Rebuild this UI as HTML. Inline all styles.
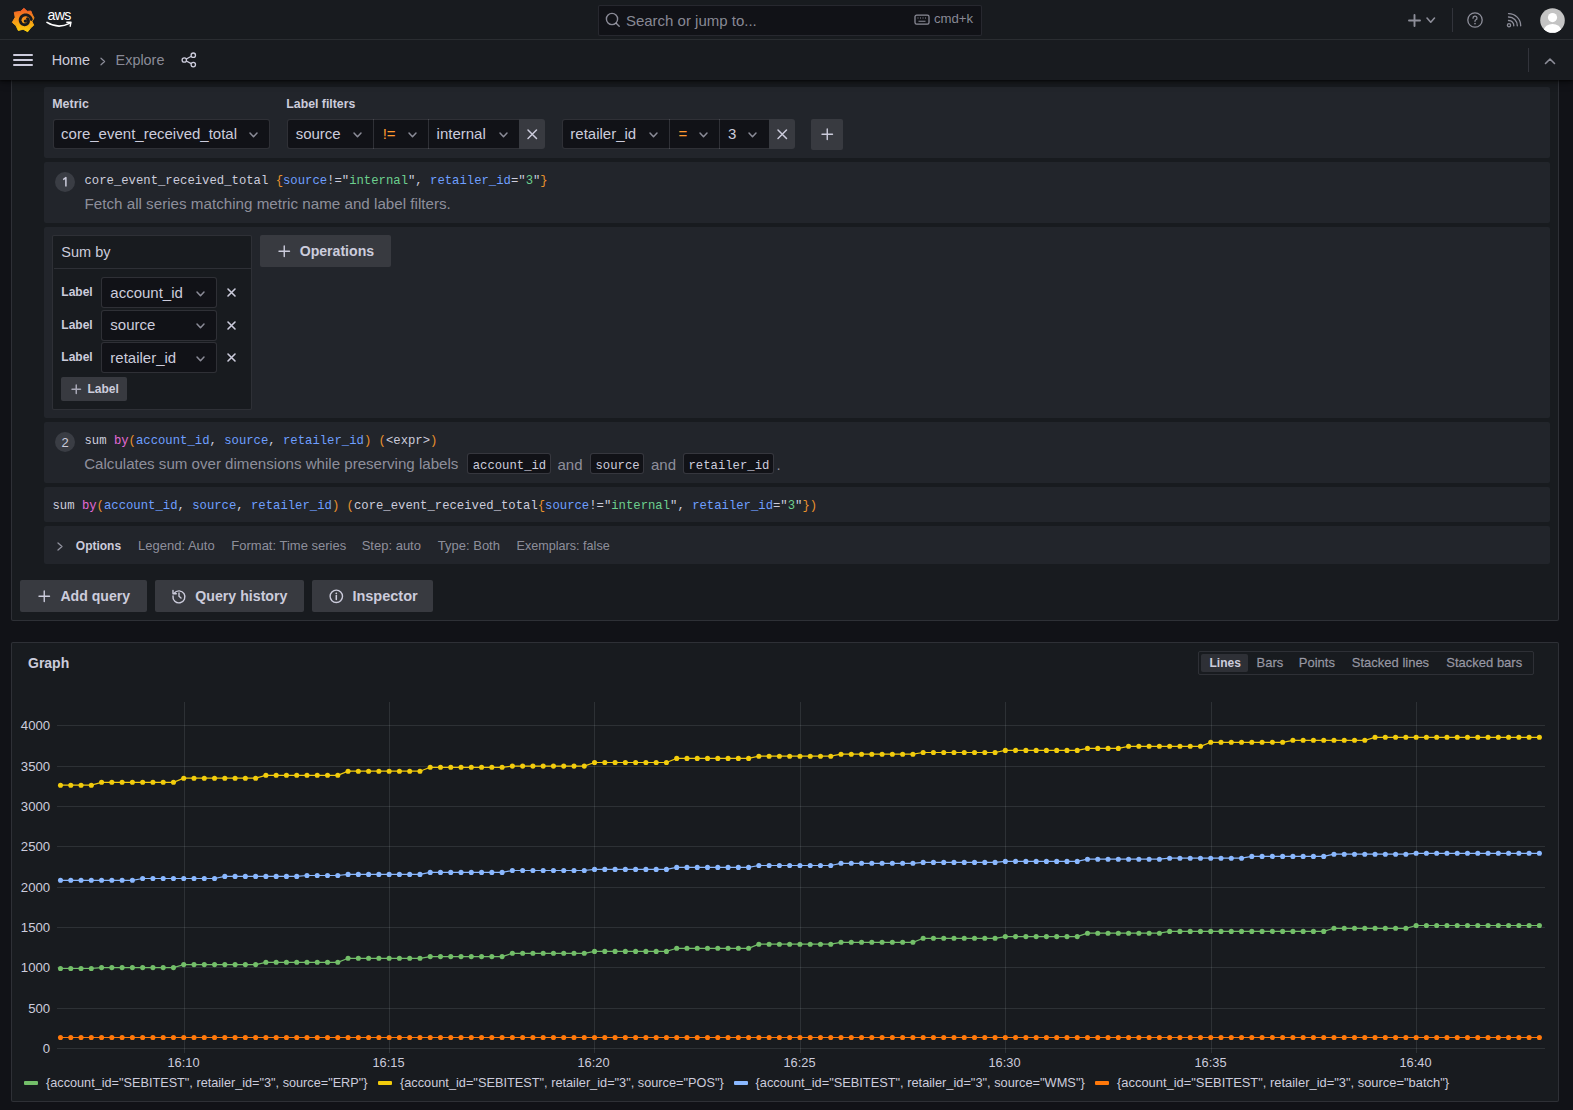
<!DOCTYPE html><html><head><meta charset="utf-8"><style>
html,body{margin:0;padding:0;}
body{width:1573px;height:1110px;overflow:hidden;background:#111217;position:relative;font-family:'Liberation Sans', sans-serif;}
</style></head><body>
<div style="position:absolute;left:11px;top:-20px;width:1546px;height:639px;background:#181b1f;border:1px solid rgba(204,204,220,0.12);border-radius:2px;"></div>
<div style="position:absolute;left:44px;top:87px;width:1506px;height:71px;background:#22252b;border-radius:2px;"></div>
<div style="position:absolute;left:44px;top:162px;width:1506px;height:61px;background:#22252b;border-radius:2px;"></div>
<div style="position:absolute;left:44px;top:227px;width:1506px;height:191px;background:#22252b;border-radius:2px;"></div>
<div style="position:absolute;left:44px;top:422px;width:1506px;height:60.5px;background:#22252b;border-radius:2px;"></div>
<div style="position:absolute;left:44px;top:487.2px;width:1506px;height:34.6px;background:#22252b;border-radius:2px;"></div>
<div style="position:absolute;left:44px;top:526px;width:1506px;height:37.8px;background:#22252b;border-radius:2px;"></div>
<div style="position:absolute;left:52.3px;top:98.00px;font-family:'Liberation Sans', sans-serif;font-size:12.4px;line-height:12.4px;color:#ccccdc;font-weight:bold;white-space:pre;">Metric</div>
<div style="position:absolute;left:286.3px;top:98.00px;font-family:'Liberation Sans', sans-serif;font-size:12.3px;line-height:12.3px;color:#ccccdc;font-weight:bold;white-space:pre;">Label filters</div>
<div style="position:absolute;left:53px;top:119px;width:216.5px;height:30px;background:#111217;border:1px solid rgba(204,204,220,0.16);box-sizing:border-box;border-radius:3px;"></div>
<div style="position:absolute;left:61.1px;top:126.00px;font-family:'Liberation Sans', sans-serif;font-size:15px;line-height:15px;color:#ccccdc;font-weight:normal;white-space:pre;">core_event_received_total</div>
<svg style="position:absolute;left:248.0px;top:130.9px;" width="11" height="7.8" viewBox="0 0 11 7.8"><path d="M2 2 L5.5 5.8 L9 2" fill="none" stroke="rgba(204,204,220,0.65)" stroke-width="1.5" stroke-linecap="round" stroke-linejoin="round"/></svg>
<div style="position:absolute;left:287px;top:119px;width:233px;height:30px;background:#111217;border:1px solid rgba(204,204,220,0.16);box-sizing:border-box;border-radius:3px 0 0 3px;"></div>
<div style="position:absolute;left:373px;top:119px;width:1px;height:30px;background:rgba(204,204,220,0.16);"></div>
<div style="position:absolute;left:428px;top:119px;width:1px;height:30px;background:rgba(204,204,220,0.16);"></div>
<div style="position:absolute;left:295.7px;top:126.00px;font-family:'Liberation Sans', sans-serif;font-size:15px;line-height:15px;color:#ccccdc;font-weight:normal;white-space:pre;">source</div>
<svg style="position:absolute;left:352.0px;top:130.9px;" width="11" height="7.8" viewBox="0 0 11 7.8"><path d="M2 2 L5.5 5.8 L9 2" fill="none" stroke="rgba(204,204,220,0.65)" stroke-width="1.5" stroke-linecap="round" stroke-linejoin="round"/></svg>
<div style="position:absolute;left:382.7px;top:126.00px;font-family:'Liberation Sans', sans-serif;font-size:15px;line-height:15px;color:#ff9830;font-weight:normal;white-space:pre;">!=</div>
<svg style="position:absolute;left:406.5px;top:130.9px;" width="11" height="7.8" viewBox="0 0 11 7.8"><path d="M2 2 L5.5 5.8 L9 2" fill="none" stroke="rgba(204,204,220,0.65)" stroke-width="1.5" stroke-linecap="round" stroke-linejoin="round"/></svg>
<div style="position:absolute;left:436.6px;top:126.00px;font-family:'Liberation Sans', sans-serif;font-size:15px;line-height:15px;color:#ccccdc;font-weight:normal;white-space:pre;">internal</div>
<svg style="position:absolute;left:497.7px;top:130.9px;" width="11" height="7.8" viewBox="0 0 11 7.8"><path d="M2 2 L5.5 5.8 L9 2" fill="none" stroke="rgba(204,204,220,0.65)" stroke-width="1.5" stroke-linecap="round" stroke-linejoin="round"/></svg>
<div style="position:absolute;left:519px;top:119px;width:26px;height:30px;background:#383a40;border-radius:0 3px 3px 0;"></div>
<svg style="position:absolute;left:525.75px;top:127.75px;" width="12.5" height="12.5" viewBox="0 0 12.5 12.5"><path d="M2 2 L10.5 10.5 M10.5 2 L2 10.5" fill="none" stroke="#ccccdc" stroke-width="1.5" stroke-linecap="round"/></svg>
<div style="position:absolute;left:562px;top:119px;width:208px;height:30px;background:#111217;border:1px solid rgba(204,204,220,0.16);box-sizing:border-box;border-radius:3px 0 0 3px;"></div>
<div style="position:absolute;left:669px;top:119px;width:1px;height:30px;background:rgba(204,204,220,0.16);"></div>
<div style="position:absolute;left:719px;top:119px;width:1px;height:30px;background:rgba(204,204,220,0.16);"></div>
<div style="position:absolute;left:570.3px;top:126.00px;font-family:'Liberation Sans', sans-serif;font-size:15px;line-height:15px;color:#ccccdc;font-weight:normal;white-space:pre;">retailer_id</div>
<svg style="position:absolute;left:648.0px;top:130.9px;" width="11" height="7.8" viewBox="0 0 11 7.8"><path d="M2 2 L5.5 5.8 L9 2" fill="none" stroke="rgba(204,204,220,0.65)" stroke-width="1.5" stroke-linecap="round" stroke-linejoin="round"/></svg>
<div style="position:absolute;left:678.5px;top:126.00px;font-family:'Liberation Sans', sans-serif;font-size:15px;line-height:15px;color:#ff9830;font-weight:normal;white-space:pre;">=</div>
<svg style="position:absolute;left:698.0px;top:130.9px;" width="11" height="7.8" viewBox="0 0 11 7.8"><path d="M2 2 L5.5 5.8 L9 2" fill="none" stroke="rgba(204,204,220,0.65)" stroke-width="1.5" stroke-linecap="round" stroke-linejoin="round"/></svg>
<div style="position:absolute;left:728px;top:126.00px;font-family:'Liberation Sans', sans-serif;font-size:15px;line-height:15px;color:#ccccdc;font-weight:normal;white-space:pre;">3</div>
<svg style="position:absolute;left:747.0px;top:130.9px;" width="11" height="7.8" viewBox="0 0 11 7.8"><path d="M2 2 L5.5 5.8 L9 2" fill="none" stroke="rgba(204,204,220,0.65)" stroke-width="1.5" stroke-linecap="round" stroke-linejoin="round"/></svg>
<div style="position:absolute;left:769px;top:119px;width:26px;height:30px;background:#383a40;border-radius:0 3px 3px 0;"></div>
<svg style="position:absolute;left:775.75px;top:127.75px;" width="12.5" height="12.5" viewBox="0 0 12.5 12.5"><path d="M2 2 L10.5 10.5 M10.5 2 L2 10.5" fill="none" stroke="#ccccdc" stroke-width="1.5" stroke-linecap="round"/></svg>
<div style="position:absolute;left:811px;top:118.5px;width:32px;height:31px;background:#383a40;border-radius:2px;"></div>
<svg style="position:absolute;left:819.75px;top:126.75px;" width="14.5" height="14.5" viewBox="0 0 14.5 14.5"><path d="M7.25 2 V12.5 M2 7.25 H12.5" fill="none" stroke="#ccccdc" stroke-width="1.4" stroke-linecap="round"/></svg>
<div style="position:absolute;left:55px;top:172px;width:20px;height:20px;background:#3a3d44;border-radius:50%;"></div>
<svg style="position:absolute;left:55px;top:172px;" width="20" height="20" viewBox="0 0 20 20"><path d="M8.2 7.6 L10.9 5.6 V14.4" fill="none" stroke="#ccccdc" stroke-width="1.5" stroke-linejoin="round"/></svg>
<div style="position:absolute;left:84.5px;top:175.00px;font-family:'Liberation Mono', monospace;font-size:12.25px;line-height:12.25px;color:#ccccdc;font-weight:normal;white-space:pre;">core_event_received_total <span style="color:#e8912d">{</span><span style="color:#6e9fff">source</span>!="<span style="color:#6ccf8e">internal</span>", <span style="color:#6e9fff">retailer_id</span>="<span style="color:#6ccf8e">3</span>"<span style="color:#e8912d">}</span></div>
<div style="position:absolute;left:84.5px;top:196.00px;font-family:'Liberation Sans', sans-serif;font-size:15.2px;line-height:15.2px;color:rgba(204,204,220,0.65);font-weight:normal;white-space:pre;">Fetch all series matching metric name and label filters.</div>
<div style="position:absolute;left:52px;top:235px;width:200px;height:174.5px;background:#181b1f;border:1px solid rgba(204,204,220,0.12);box-sizing:border-box;border-radius:2px;"></div>
<div style="position:absolute;left:53.5px;top:268px;width:197.2px;height:1px;background:rgba(204,204,220,0.12);"></div>
<div style="position:absolute;left:61.3px;top:245.00px;font-family:'Liberation Sans', sans-serif;font-size:14.5px;line-height:14.5px;color:#ccccdc;font-weight:normal;white-space:pre;">Sum by</div>
<div style="position:absolute;left:260px;top:235px;width:131px;height:32px;background:#383a40;border-radius:2px;"></div>
<svg style="position:absolute;left:276.75px;top:243.75px;" width="14.5" height="14.5" viewBox="0 0 14.5 14.5"><path d="M7.25 2 V12.5 M2 7.25 H12.5" fill="none" stroke="#ccccdc" stroke-width="1.4" stroke-linecap="round"/></svg>
<div style="position:absolute;left:299.7px;top:244.00px;font-family:'Liberation Sans', sans-serif;font-size:14.1px;line-height:14.1px;color:#ccccdc;font-weight:bold;white-space:pre;">Operations</div>
<div style="position:absolute;left:61.3px;top:286.00px;font-family:'Liberation Sans', sans-serif;font-size:12px;line-height:12px;color:#ccccdc;font-weight:bold;white-space:pre;">Label</div>
<div style="position:absolute;left:101.3px;top:277.2px;width:115.4px;height:31px;background:#111217;border:1px solid rgba(204,204,220,0.16);box-sizing:border-box;border-radius:3px;"></div>
<div style="position:absolute;left:110.3px;top:285.00px;font-family:'Liberation Sans', sans-serif;font-size:15px;line-height:15px;color:#ccccdc;font-weight:normal;white-space:pre;">account_id</div>
<svg style="position:absolute;left:194.7px;top:289.90000000000003px;" width="11" height="7.8" viewBox="0 0 11 7.8"><path d="M2 2 L5.5 5.8 L9 2" fill="none" stroke="rgba(204,204,220,0.65)" stroke-width="1.5" stroke-linecap="round" stroke-linejoin="round"/></svg>
<svg style="position:absolute;left:226.3px;top:287.3px;" width="11" height="11" viewBox="0 0 11 11"><path d="M2 2 L9 9 M9 2 L2 9" fill="none" stroke="#ccccdc" stroke-width="1.6" stroke-linecap="round"/></svg>
<div style="position:absolute;left:61.3px;top:319.00px;font-family:'Liberation Sans', sans-serif;font-size:12px;line-height:12px;color:#ccccdc;font-weight:bold;white-space:pre;">Label</div>
<div style="position:absolute;left:101.3px;top:309.5px;width:115.4px;height:31px;background:#111217;border:1px solid rgba(204,204,220,0.16);box-sizing:border-box;border-radius:3px;"></div>
<div style="position:absolute;left:110.3px;top:317.00px;font-family:'Liberation Sans', sans-serif;font-size:15px;line-height:15px;color:#ccccdc;font-weight:normal;white-space:pre;">source</div>
<svg style="position:absolute;left:194.7px;top:322.20000000000005px;" width="11" height="7.8" viewBox="0 0 11 7.8"><path d="M2 2 L5.5 5.8 L9 2" fill="none" stroke="rgba(204,204,220,0.65)" stroke-width="1.5" stroke-linecap="round" stroke-linejoin="round"/></svg>
<svg style="position:absolute;left:226.3px;top:319.6px;" width="11" height="11" viewBox="0 0 11 11"><path d="M2 2 L9 9 M9 2 L2 9" fill="none" stroke="#ccccdc" stroke-width="1.6" stroke-linecap="round"/></svg>
<div style="position:absolute;left:61.3px;top:351.00px;font-family:'Liberation Sans', sans-serif;font-size:12px;line-height:12px;color:#ccccdc;font-weight:bold;white-space:pre;">Label</div>
<div style="position:absolute;left:101.3px;top:341.79999999999995px;width:115.4px;height:31px;background:#111217;border:1px solid rgba(204,204,220,0.16);box-sizing:border-box;border-radius:3px;"></div>
<div style="position:absolute;left:110.3px;top:350.00px;font-family:'Liberation Sans', sans-serif;font-size:15px;line-height:15px;color:#ccccdc;font-weight:normal;white-space:pre;">retailer_id</div>
<svg style="position:absolute;left:194.7px;top:354.5px;" width="11" height="7.8" viewBox="0 0 11 7.8"><path d="M2 2 L5.5 5.8 L9 2" fill="none" stroke="rgba(204,204,220,0.65)" stroke-width="1.5" stroke-linecap="round" stroke-linejoin="round"/></svg>
<svg style="position:absolute;left:226.3px;top:351.9px;" width="11" height="11" viewBox="0 0 11 11"><path d="M2 2 L9 9 M9 2 L2 9" fill="none" stroke="#ccccdc" stroke-width="1.6" stroke-linecap="round"/></svg>
<div style="position:absolute;left:61px;top:377px;width:66px;height:24px;background:#383a40;border-radius:2px;"></div>
<svg style="position:absolute;left:69.95px;top:382.75px;" width="12.5" height="12.5" viewBox="0 0 12.5 12.5"><path d="M6.25 2 V10.5 M2 6.25 H10.5" fill="none" stroke="rgba(204,204,220,0.75)" stroke-width="1.5" stroke-linecap="round"/></svg>
<div style="position:absolute;left:87.4px;top:383.00px;font-family:'Liberation Sans', sans-serif;font-size:12px;line-height:12px;color:#ccccdc;font-weight:bold;white-space:pre;">Label</div>
<div style="position:absolute;left:55px;top:432px;width:20px;height:20px;background:#3a3d44;border-radius:50%;"></div>
<div style="position:absolute;left:65.2px;top:436.00px;font-family:'Liberation Sans', sans-serif;font-size:13px;line-height:13px;color:#ccccdc;font-weight:normal;white-space:pre;transform:translateX(-50%);">2</div>
<div style="position:absolute;left:84.5px;top:435.00px;font-family:'Liberation Mono', monospace;font-size:12.25px;line-height:12.25px;color:#ccccdc;font-weight:normal;white-space:pre;">sum <span style="color:#e36ad6">by</span><span style="color:#e8912d">(</span><span style="color:#6e9fff">account_id</span>, <span style="color:#6e9fff">source</span>, <span style="color:#6e9fff">retailer_id</span><span style="color:#e8912d">)</span> <span style="color:#e8912d">(</span><span style="color:#ccccdc">&lt;expr&gt;</span><span style="color:#e8912d">)</span></div>
<div style="position:absolute;left:84.2px;top:456.00px;font-family:'Liberation Sans', sans-serif;font-size:15.1px;line-height:15.1px;color:rgba(204,204,220,0.65);font-weight:normal;white-space:pre;">Calculates sum over dimensions while preserving labels</div>
<div style="position:absolute;left:466.7px;top:453.4px;width:84.30000000000001px;height:20.8px;background:#111217;border:1px solid rgba(204,204,220,0.2);box-sizing:border-box;border-radius:3px;"></div>
<div style="position:absolute;left:472.7px;top:460.00px;font-family:'Liberation Mono', monospace;font-size:12.25px;line-height:12.25px;color:#ccccdc;font-weight:normal;white-space:pre;">account_id</div>
<div style="position:absolute;left:589.5px;top:453.4px;width:54.799999999999955px;height:20.8px;background:#111217;border:1px solid rgba(204,204,220,0.2);box-sizing:border-box;border-radius:3px;"></div>
<div style="position:absolute;left:595.5px;top:460.00px;font-family:'Liberation Mono', monospace;font-size:12.25px;line-height:12.25px;color:#ccccdc;font-weight:normal;white-space:pre;">source</div>
<div style="position:absolute;left:682.5px;top:453.4px;width:91.79999999999995px;height:20.8px;background:#111217;border:1px solid rgba(204,204,220,0.2);box-sizing:border-box;border-radius:3px;"></div>
<div style="position:absolute;left:688.5px;top:460.00px;font-family:'Liberation Mono', monospace;font-size:12.25px;line-height:12.25px;color:#ccccdc;font-weight:normal;white-space:pre;">retailer_id</div>
<div style="position:absolute;left:557.5px;top:457.00px;font-family:'Liberation Sans', sans-serif;font-size:15px;line-height:15px;color:rgba(204,204,220,0.65);font-weight:normal;white-space:pre;">and</div>
<div style="position:absolute;left:651px;top:457.00px;font-family:'Liberation Sans', sans-serif;font-size:15px;line-height:15px;color:rgba(204,204,220,0.65);font-weight:normal;white-space:pre;">and</div>
<div style="position:absolute;left:776.5px;top:457.00px;font-family:'Liberation Sans', sans-serif;font-size:15px;line-height:15px;color:rgba(204,204,220,0.65);font-weight:normal;white-space:pre;">.</div>
<div style="position:absolute;left:52.5px;top:500.00px;font-family:'Liberation Mono', monospace;font-size:12.25px;line-height:12.25px;color:#ccccdc;font-weight:normal;white-space:pre;">sum <span style="color:#e36ad6">by</span><span style="color:#e8912d">(</span><span style="color:#6e9fff">account_id</span>, <span style="color:#6e9fff">source</span>, <span style="color:#6e9fff">retailer_id</span><span style="color:#e8912d">)</span> <span style="color:#e8912d">(</span>core_event_received_total<span style="color:#e8912d">{</span><span style="color:#6e9fff">source</span>!="<span style="color:#6ccf8e">internal</span>", <span style="color:#6e9fff">retailer_id</span>="<span style="color:#6ccf8e">3</span>"<span style="color:#e8912d">}</span><span style="color:#e8912d">)</span></div>
<svg style="position:absolute;left:55px;top:541px;" width="10" height="11" viewBox="0 0 10 11"><path d="M3 2 L7 5.5 L3 9" fill="none" stroke="rgba(204,204,220,0.65)" stroke-width="1.3" stroke-linecap="round" stroke-linejoin="round"/></svg>
<div style="position:absolute;left:75.8px;top:540.00px;font-family:'Liberation Sans', sans-serif;font-size:12px;line-height:12px;color:#ccccdc;font-weight:bold;white-space:pre;">Options</div>
<div style="position:absolute;left:138px;top:539.00px;font-family:'Liberation Sans', sans-serif;font-size:13px;line-height:13px;color:rgba(204,204,220,0.65);font-weight:normal;white-space:pre;">Legend: Auto</div>
<div style="position:absolute;left:231.3px;top:539.00px;font-family:'Liberation Sans', sans-serif;font-size:13px;line-height:13px;color:rgba(204,204,220,0.65);font-weight:normal;white-space:pre;">Format: Time series</div>
<div style="position:absolute;left:361.7px;top:539.00px;font-family:'Liberation Sans', sans-serif;font-size:13px;line-height:13px;color:rgba(204,204,220,0.65);font-weight:normal;white-space:pre;">Step: auto</div>
<div style="position:absolute;left:437.8px;top:539.00px;font-family:'Liberation Sans', sans-serif;font-size:13px;line-height:13px;color:rgba(204,204,220,0.65);font-weight:normal;white-space:pre;">Type: Both</div>
<div style="position:absolute;left:516.6px;top:540.00px;font-family:'Liberation Sans', sans-serif;font-size:12.6px;line-height:12.6px;color:rgba(204,204,220,0.65);font-weight:normal;white-space:pre;">Exemplars: false</div>
<div style="position:absolute;left:20px;top:580px;width:127px;height:32px;background:#383a40;border-radius:2px;"></div>
<div style="position:absolute;left:155px;top:580px;width:149px;height:32px;background:#383a40;border-radius:2px;"></div>
<div style="position:absolute;left:312px;top:580px;width:121px;height:32px;background:#383a40;border-radius:2px;"></div>
<svg style="position:absolute;left:36.55px;top:588.75px;" width="14.5" height="14.5" viewBox="0 0 14.5 14.5"><path d="M7.25 2 V12.5 M2 7.25 H12.5" fill="none" stroke="#ccccdc" stroke-width="1.4" stroke-linecap="round"/></svg>
<div style="position:absolute;left:60.4px;top:589.00px;font-family:'Liberation Sans', sans-serif;font-size:14.1px;line-height:14.1px;color:#ccccdc;font-weight:bold;white-space:pre;">Add query</div>
<svg style="position:absolute;left:170px;top:586.5px;" width="18" height="18" viewBox="0 0 18 18"><path d="M4.2 6.2 A6 6 0 1 1 3 9" fill="none" stroke="#ccccdc" stroke-width="1.4" stroke-linecap="round"/><path d="M3 3.5 V6.8 H6.3" fill="none" stroke="#ccccdc" stroke-width="1.4" stroke-linecap="round" stroke-linejoin="round"/><path d="M9 6 V9.3 L11 11" fill="none" stroke="#ccccdc" stroke-width="1.4" stroke-linecap="round"/></svg>
<div style="position:absolute;left:195.2px;top:589.00px;font-family:'Liberation Sans', sans-serif;font-size:14.2px;line-height:14.2px;color:#ccccdc;font-weight:bold;white-space:pre;">Query history</div>
<svg style="position:absolute;left:328px;top:588px;" width="17" height="17" viewBox="0 0 17 17"><circle cx="8.3" cy="8.3" r="6.2" fill="none" stroke="#ccccdc" stroke-width="1.4"/><path d="M8.3 7.5 V11.5" stroke="#ccccdc" stroke-width="1.5" stroke-linecap="round"/><circle cx="8.3" cy="5.3" r="0.9" fill="#ccccdc"/></svg>
<div style="position:absolute;left:352.4px;top:589.00px;font-family:'Liberation Sans', sans-serif;font-size:14.5px;line-height:14.5px;color:#ccccdc;font-weight:bold;white-space:pre;">Inspector</div>
<div style="position:absolute;left:0;top:0;width:1573px;height:80px;background:#181b1f;box-shadow:0 1px 2px rgba(0,0,0,0.6), 0 2px 8px rgba(0,0,0,0.45);"></div>
<div style="position:absolute;left:0px;top:39px;width:1573px;height:1px;background:rgba(204,204,220,0.10);"></div>
<svg style="position:absolute;left:10px;top:6px;" width="26" height="28" viewBox="0 0 26 28"><defs><linearGradient id="glg" x1="0" y1="1" x2="0" y2="0"><stop offset="0" stop-color="#fcd00a"/><stop offset="1" stop-color="#f05a28"/></linearGradient></defs>
<path fill="url(#glg)" stroke="url(#glg)" stroke-width="1.0" stroke-linejoin="round" d="M13.90 2.30 L17.20 5.30 L20.90 5.00 L22.00 8.00 L24.00 11.90 L22.00 15.60 L23.70 19.20 L20.50 22.00 L17.70 25.70 L13.10 23.20 L8.30 24.50 L6.00 19.60 L2.30 16.40 L5.20 11.30 L4.30 6.30 L10.80 5.30Z"/>
<path fill="none" stroke="#181b1f" stroke-width="2.8" stroke-linecap="round" stroke-linejoin="round" d="M21.40 13.49 L21.18 12.80 L20.89 12.14 L20.52 11.53 L20.09 10.97 L19.61 10.47 L19.08 10.03 L18.50 9.65 L17.89 9.35 L17.26 9.12 L16.61 8.97 L15.95 8.89 L15.30 8.88 L14.66 8.95 L14.03 9.10 L13.43 9.31 L12.87 9.58 L12.34 9.92 L11.86 10.30 L11.44 10.74 L11.07 11.21 L10.76 11.72 L10.51 12.26 L10.33 12.82 L10.21 13.38 L10.16 13.95 L10.17 14.51 L10.25 15.07 L10.39 15.60 L10.59 16.11 L10.84 16.59 L11.14 17.03 L11.49 17.42 L11.87 17.78 L12.28 18.08 L12.73 18.32 L13.19 18.52 L13.66 18.66 L14.14 18.74 L14.63 18.76 L15.10 18.73 L15.56 18.65 L16.00 18.52 L16.42 18.34 L16.81 18.11 L17.17 17.85 L17.49 17.55 L17.77 17.22 L18.00 16.87 L18.19 16.49 L18.33 16.11 L18.43 15.71 L18.48 15.32 L18.48 14.93 L18.44 14.54 L18.36 14.17 L18.23 13.82 L18.07 13.49 L17.87 13.19 L17.65 12.91 L17.40 12.67"/>
<circle cx="15.40" cy="15.10" r="1.7" fill="#181b1f"/></svg>
<div style="position:absolute;left:47.4px;top:8.00px;font-family:'Liberation Sans', sans-serif;font-size:14.2px;line-height:14.2px;color:#ffffff;font-weight:normal;white-space:pre;letter-spacing:-0.6px;">aws</div>
<svg style="position:absolute;left:45px;top:20px;" width="29" height="9" viewBox="0 0 29 9"><path d="M2 2.4 Q13 9.2 24.5 3.4" fill="none" stroke="#ffffff" stroke-width="1.6" stroke-linecap="round"/><path d="M21.8 2.2 L26 2.1 L25.2 6.2" fill="none" stroke="#ffffff" stroke-width="1.4" stroke-linecap="round" stroke-linejoin="round"/></svg>
<div style="position:absolute;left:597.5px;top:4.5px;width:384.5px;height:31px;background:#111217;border:1px solid rgba(204,204,220,0.12);box-sizing:border-box;border-radius:2px;"></div>
<svg style="position:absolute;left:604px;top:11px;" width="18" height="18" viewBox="0 0 18 18"><circle cx="8" cy="8" r="5.6" fill="none" stroke="rgba(204,204,220,0.65)" stroke-width="1.4"/><path d="M12.2 12.2 L15.2 15.2" stroke="rgba(204,204,220,0.65)" stroke-width="1.4" stroke-linecap="round"/></svg>
<div style="position:absolute;left:625.9px;top:13.00px;font-family:'Liberation Sans', sans-serif;font-size:15px;line-height:15px;color:rgba(204,204,220,0.65);font-weight:normal;white-space:pre;">Search or jump to...</div>
<svg style="position:absolute;left:913px;top:13px;" width="18" height="13" viewBox="0 0 18 13"><rect x="2" y="2.2" width="14" height="9" rx="1.6" fill="none" stroke="rgba(204,204,220,0.65)" stroke-width="1.3"/><path d="M4.5 5 H5.5 M7 5 H8 M9.5 5 H10.5 M12 5 H13 M5.5 8.3 H12.5" stroke="rgba(204,204,220,0.65)" stroke-width="1.1"/></svg>
<div style="position:absolute;left:933.9px;top:12.00px;font-family:'Liberation Sans', sans-serif;font-size:13.2px;line-height:13.2px;color:rgba(204,204,220,0.65);font-weight:normal;white-space:pre;">cmd+k</div>
<svg style="position:absolute;left:1406.5px;top:12.7px;" width="15" height="15" viewBox="0 0 15 15"><path d="M7.5 2 V13 M2 7.5 H13" fill="none" stroke="rgba(204,204,220,0.65)" stroke-width="1.9" stroke-linecap="round"/></svg>
<svg style="position:absolute;left:1425.45px;top:15.899999999999999px;" width="11.5" height="8.2" viewBox="0 0 11.5 8.2"><path d="M2 2 L5.75 6.2 L9.5 2" fill="none" stroke="rgba(204,204,220,0.65)" stroke-width="1.6" stroke-linecap="round" stroke-linejoin="round"/></svg>
<div style="position:absolute;left:1452px;top:8px;width:1px;height:24px;background:rgba(204,204,220,0.15);"></div>
<svg style="position:absolute;left:1465px;top:10px;" width="20" height="20" viewBox="0 0 20 20"><circle cx="10" cy="10" r="7.2" fill="none" stroke="rgba(204,204,220,0.65)" stroke-width="1.3"/><path d="M8 8.2 A2 2 0 1 1 10.6 10 Q10 10.4 10 11.3" fill="none" stroke="rgba(204,204,220,0.65)" stroke-width="1.3" stroke-linecap="round"/><circle cx="10" cy="13.6" r="0.85" fill="rgba(204,204,220,0.65)"/></svg>
<svg style="position:absolute;left:1504px;top:11px;" width="20" height="19" viewBox="0 0 20 19"><circle cx="5" cy="14.2" r="1.6" fill="none" stroke="rgba(204,204,220,0.65)" stroke-width="1.3"/><path d="M4.5 9.5 A5 5 0 0 1 9.8 14.8 M4.5 6 A8.6 8.6 0 0 1 13.3 14.8 M4.5 2.6 A12.1 12.1 0 0 1 16.7 14.8" fill="none" stroke="rgba(204,204,220,0.65)" stroke-width="1.3" stroke-linecap="round"/></svg>
<svg style="position:absolute;left:1539.5px;top:7.5px;" width="25" height="25" viewBox="0 0 25 25"><defs><clipPath id="avc"><circle cx="12.5" cy="12.5" r="12.3"/></clipPath></defs><circle cx="12.5" cy="12.5" r="12.3" fill="#c4c4c4"/><g clip-path="url(#avc)"><circle cx="12.5" cy="9.6" r="4.6" fill="#fff"/><ellipse cx="12.5" cy="22.5" rx="8.6" ry="6.6" fill="#fff"/></g></svg>
<div style="position:absolute;left:13px;top:54.3px;width:20px;height:1.7px;background:#ccccdc;border-radius:1px;"></div>
<div style="position:absolute;left:13px;top:59.3px;width:20px;height:1.7px;background:#ccccdc;border-radius:1px;"></div>
<div style="position:absolute;left:13px;top:64.3px;width:20px;height:1.7px;background:#ccccdc;border-radius:1px;"></div>
<div style="position:absolute;left:51.7px;top:53.00px;font-family:'Liberation Sans', sans-serif;font-size:14.4px;line-height:14.4px;color:#ccccdc;font-weight:normal;white-space:pre;">Home</div>
<svg style="position:absolute;left:98px;top:55.5px;" width="10" height="11" viewBox="0 0 10 11"><path d="M3 2.2 L6.6 5.5 L3 8.8" fill="none" stroke="rgba(204,204,220,0.65)" stroke-width="1.2" stroke-linecap="round" stroke-linejoin="round"/></svg>
<div style="position:absolute;left:115.6px;top:53.00px;font-family:'Liberation Sans', sans-serif;font-size:14.4px;line-height:14.4px;color:rgba(204,204,220,0.65);font-weight:normal;white-space:pre;">Explore</div>
<svg style="position:absolute;left:180px;top:51px;" width="18" height="18" viewBox="0 0 18 18"><circle cx="4.3" cy="9" r="2.2" fill="none" stroke="#ccccdc" stroke-width="1.3"/><circle cx="13.3" cy="4.2" r="2.2" fill="none" stroke="#ccccdc" stroke-width="1.3"/><circle cx="13.3" cy="13.6" r="2.2" fill="none" stroke="#ccccdc" stroke-width="1.3"/><path d="M6.3 8 L11.3 5.2 M6.3 10 L11.3 12.6" stroke="#ccccdc" stroke-width="1.3"/></svg>
<div style="position:absolute;left:1528px;top:48px;width:1px;height:24px;background:rgba(204,204,220,0.15);"></div>
<svg style="position:absolute;left:1543px;top:56px;" width="14" height="10" viewBox="0 0 14 10"><path d="M2.5 7.5 L7 3 L11.5 7.5" fill="none" stroke="rgba(204,204,220,0.65)" stroke-width="1.6" stroke-linecap="round" stroke-linejoin="round"/></svg>
<div style="position:absolute;left:11px;top:642px;width:1546px;height:458px;background:#181b1f;border:1px solid rgba(204,204,220,0.12);border-radius:2px;"></div>
<div style="position:absolute;left:28px;top:656.00px;font-family:'Liberation Sans', sans-serif;font-size:14px;line-height:14px;color:#ccccdc;font-weight:bold;white-space:pre;">Graph</div>
<div style="position:absolute;left:1198px;top:651px;width:336px;height:24px;border:1px solid rgba(204,204,220,0.12);box-sizing:border-box;border-radius:2px;"></div>
<div style="position:absolute;left:1201px;top:654px;width:47px;height:18px;background:rgba(204,204,220,0.12);border-radius:2px;"></div>
<div style="position:absolute;left:1209.5px;top:657.00px;font-family:'Liberation Sans', sans-serif;font-size:12px;line-height:12px;color:#ccccdc;font-weight:bold;white-space:pre;">Lines</div>
<div style="position:absolute;left:1256.5px;top:656.00px;font-family:'Liberation Sans', sans-serif;font-size:13px;line-height:13px;color:rgba(204,204,220,0.65);font-weight:normal;white-space:pre;-webkit-text-stroke:0.3px rgba(204,204,220,0.5);">Bars</div>
<div style="position:absolute;left:1298.8px;top:656.00px;font-family:'Liberation Sans', sans-serif;font-size:13px;line-height:13px;color:rgba(204,204,220,0.65);font-weight:normal;white-space:pre;-webkit-text-stroke:0.3px rgba(204,204,220,0.5);">Points</div>
<div style="position:absolute;left:1351.8px;top:656.00px;font-family:'Liberation Sans', sans-serif;font-size:13px;line-height:13px;color:rgba(204,204,220,0.65);font-weight:normal;white-space:pre;-webkit-text-stroke:0.3px rgba(204,204,220,0.5);">Stacked lines</div>
<div style="position:absolute;left:1446.3px;top:656.00px;font-family:'Liberation Sans', sans-serif;font-size:13px;line-height:13px;color:rgba(204,204,220,0.65);font-weight:normal;white-space:pre;-webkit-text-stroke:0.3px rgba(204,204,220,0.5);">Stacked bars</div>
<svg style="position:absolute;left:0px;top:0px;pointer-events:none;" width="1573" height="1110" viewBox="0 0 1573 1110"><line x1="57" y1="1048.5" x2="1545" y2="1048.5" stroke="rgba(240,250,255,0.10)" stroke-width="1"/><line x1="57" y1="1008.5" x2="1545" y2="1008.5" stroke="rgba(240,250,255,0.10)" stroke-width="1"/><line x1="57" y1="967.5" x2="1545" y2="967.5" stroke="rgba(240,250,255,0.10)" stroke-width="1"/><line x1="57" y1="927.5" x2="1545" y2="927.5" stroke="rgba(240,250,255,0.10)" stroke-width="1"/><line x1="57" y1="887.5" x2="1545" y2="887.5" stroke="rgba(240,250,255,0.10)" stroke-width="1"/><line x1="57" y1="846.5" x2="1545" y2="846.5" stroke="rgba(240,250,255,0.10)" stroke-width="1"/><line x1="57" y1="806.5" x2="1545" y2="806.5" stroke="rgba(240,250,255,0.10)" stroke-width="1"/><line x1="57" y1="766.5" x2="1545" y2="766.5" stroke="rgba(240,250,255,0.10)" stroke-width="1"/><line x1="57" y1="725.5" x2="1545" y2="725.5" stroke="rgba(240,250,255,0.10)" stroke-width="1"/><line x1="184.5" y1="702" x2="184.5" y2="1053" stroke="rgba(240,250,255,0.10)" stroke-width="1"/><line x1="389.5" y1="702" x2="389.5" y2="1053" stroke="rgba(240,250,255,0.10)" stroke-width="1"/><line x1="594.5" y1="702" x2="594.5" y2="1053" stroke="rgba(240,250,255,0.10)" stroke-width="1"/><line x1="800.5" y1="702" x2="800.5" y2="1053" stroke="rgba(240,250,255,0.10)" stroke-width="1"/><line x1="1005.5" y1="702" x2="1005.5" y2="1053" stroke="rgba(240,250,255,0.10)" stroke-width="1"/><line x1="1211.5" y1="702" x2="1211.5" y2="1053" stroke="rgba(240,250,255,0.10)" stroke-width="1"/><line x1="1416.5" y1="702" x2="1416.5" y2="1053" stroke="rgba(240,250,255,0.10)" stroke-width="1"/><path d="M60.50 1037.50 L70.77 1037.50 L81.04 1037.50 L91.31 1037.50 L101.58 1037.50 L111.85 1037.50 L122.12 1037.50 L132.39 1037.50 L142.66 1037.50 L152.93 1037.50 L163.20 1037.50 L173.47 1037.50 L183.74 1037.50 L194.01 1037.50 L204.28 1037.50 L214.55 1037.50 L224.82 1037.50 L235.09 1037.50 L245.36 1037.50 L255.63 1037.50 L265.90 1037.50 L276.17 1037.50 L286.44 1037.50 L296.71 1037.50 L306.98 1037.50 L317.25 1037.50 L327.52 1037.50 L337.79 1037.50 L348.06 1037.50 L358.33 1037.50 L368.60 1037.50 L378.87 1037.50 L389.14 1037.50 L399.41 1037.50 L409.68 1037.50 L419.95 1037.50 L430.22 1037.50 L440.49 1037.50 L450.76 1037.50 L461.03 1037.50 L471.30 1037.50 L481.57 1037.50 L491.84 1037.50 L502.11 1037.50 L512.38 1037.50 L522.65 1037.50 L532.92 1037.50 L543.19 1037.50 L553.46 1037.50 L563.73 1037.50 L574.00 1037.50 L584.27 1037.50 L594.54 1037.50 L604.81 1037.50 L615.08 1037.50 L625.35 1037.50 L635.62 1037.50 L645.89 1037.50 L656.16 1037.50 L666.43 1037.50 L676.70 1037.50 L686.97 1037.50 L697.24 1037.50 L707.51 1037.50 L717.78 1037.50 L728.05 1037.50 L738.32 1037.50 L748.59 1037.50 L758.86 1037.50 L769.13 1037.50 L779.40 1037.50 L789.67 1037.50 L799.94 1037.50 L810.21 1037.50 L820.48 1037.50 L830.75 1037.50 L841.02 1037.50 L851.29 1037.50 L861.56 1037.50 L871.83 1037.50 L882.10 1037.50 L892.37 1037.50 L902.64 1037.50 L912.91 1037.50 L923.18 1037.50 L933.45 1037.50 L943.72 1037.50 L953.99 1037.50 L964.26 1037.50 L974.53 1037.50 L984.80 1037.50 L995.07 1037.50 L1005.34 1037.50 L1015.61 1037.50 L1025.88 1037.50 L1036.15 1037.50 L1046.42 1037.50 L1056.69 1037.50 L1066.96 1037.50 L1077.23 1037.50 L1087.50 1037.50 L1097.77 1037.50 L1108.04 1037.50 L1118.31 1037.50 L1128.58 1037.50 L1138.85 1037.50 L1149.12 1037.50 L1159.39 1037.50 L1169.66 1037.50 L1179.93 1037.50 L1190.20 1037.50 L1200.47 1037.50 L1210.74 1037.50 L1221.01 1037.50 L1231.28 1037.50 L1241.55 1037.50 L1251.82 1037.50 L1262.09 1037.50 L1272.36 1037.50 L1282.63 1037.50 L1292.90 1037.50 L1303.17 1037.50 L1313.44 1037.50 L1323.71 1037.50 L1333.98 1037.50 L1344.25 1037.50 L1354.52 1037.50 L1364.79 1037.50 L1375.06 1037.50 L1385.33 1037.50 L1395.60 1037.50 L1405.87 1037.50 L1416.14 1037.50 L1426.41 1037.50 L1436.68 1037.50 L1446.95 1037.50 L1457.22 1037.50 L1467.49 1037.50 L1477.76 1037.50 L1488.03 1037.50 L1498.30 1037.50 L1508.57 1037.50 L1518.84 1037.50 L1529.11 1037.50 L1539.38 1037.50" fill="none" stroke="#ff780a" stroke-width="1.2"/><g fill="#ff780a"><circle cx="60.50" cy="1037.50" r="2.55"/><circle cx="70.77" cy="1037.50" r="2.55"/><circle cx="81.04" cy="1037.50" r="2.55"/><circle cx="91.31" cy="1037.50" r="2.55"/><circle cx="101.58" cy="1037.50" r="2.55"/><circle cx="111.85" cy="1037.50" r="2.55"/><circle cx="122.12" cy="1037.50" r="2.55"/><circle cx="132.39" cy="1037.50" r="2.55"/><circle cx="142.66" cy="1037.50" r="2.55"/><circle cx="152.93" cy="1037.50" r="2.55"/><circle cx="163.20" cy="1037.50" r="2.55"/><circle cx="173.47" cy="1037.50" r="2.55"/><circle cx="183.74" cy="1037.50" r="2.55"/><circle cx="194.01" cy="1037.50" r="2.55"/><circle cx="204.28" cy="1037.50" r="2.55"/><circle cx="214.55" cy="1037.50" r="2.55"/><circle cx="224.82" cy="1037.50" r="2.55"/><circle cx="235.09" cy="1037.50" r="2.55"/><circle cx="245.36" cy="1037.50" r="2.55"/><circle cx="255.63" cy="1037.50" r="2.55"/><circle cx="265.90" cy="1037.50" r="2.55"/><circle cx="276.17" cy="1037.50" r="2.55"/><circle cx="286.44" cy="1037.50" r="2.55"/><circle cx="296.71" cy="1037.50" r="2.55"/><circle cx="306.98" cy="1037.50" r="2.55"/><circle cx="317.25" cy="1037.50" r="2.55"/><circle cx="327.52" cy="1037.50" r="2.55"/><circle cx="337.79" cy="1037.50" r="2.55"/><circle cx="348.06" cy="1037.50" r="2.55"/><circle cx="358.33" cy="1037.50" r="2.55"/><circle cx="368.60" cy="1037.50" r="2.55"/><circle cx="378.87" cy="1037.50" r="2.55"/><circle cx="389.14" cy="1037.50" r="2.55"/><circle cx="399.41" cy="1037.50" r="2.55"/><circle cx="409.68" cy="1037.50" r="2.55"/><circle cx="419.95" cy="1037.50" r="2.55"/><circle cx="430.22" cy="1037.50" r="2.55"/><circle cx="440.49" cy="1037.50" r="2.55"/><circle cx="450.76" cy="1037.50" r="2.55"/><circle cx="461.03" cy="1037.50" r="2.55"/><circle cx="471.30" cy="1037.50" r="2.55"/><circle cx="481.57" cy="1037.50" r="2.55"/><circle cx="491.84" cy="1037.50" r="2.55"/><circle cx="502.11" cy="1037.50" r="2.55"/><circle cx="512.38" cy="1037.50" r="2.55"/><circle cx="522.65" cy="1037.50" r="2.55"/><circle cx="532.92" cy="1037.50" r="2.55"/><circle cx="543.19" cy="1037.50" r="2.55"/><circle cx="553.46" cy="1037.50" r="2.55"/><circle cx="563.73" cy="1037.50" r="2.55"/><circle cx="574.00" cy="1037.50" r="2.55"/><circle cx="584.27" cy="1037.50" r="2.55"/><circle cx="594.54" cy="1037.50" r="2.55"/><circle cx="604.81" cy="1037.50" r="2.55"/><circle cx="615.08" cy="1037.50" r="2.55"/><circle cx="625.35" cy="1037.50" r="2.55"/><circle cx="635.62" cy="1037.50" r="2.55"/><circle cx="645.89" cy="1037.50" r="2.55"/><circle cx="656.16" cy="1037.50" r="2.55"/><circle cx="666.43" cy="1037.50" r="2.55"/><circle cx="676.70" cy="1037.50" r="2.55"/><circle cx="686.97" cy="1037.50" r="2.55"/><circle cx="697.24" cy="1037.50" r="2.55"/><circle cx="707.51" cy="1037.50" r="2.55"/><circle cx="717.78" cy="1037.50" r="2.55"/><circle cx="728.05" cy="1037.50" r="2.55"/><circle cx="738.32" cy="1037.50" r="2.55"/><circle cx="748.59" cy="1037.50" r="2.55"/><circle cx="758.86" cy="1037.50" r="2.55"/><circle cx="769.13" cy="1037.50" r="2.55"/><circle cx="779.40" cy="1037.50" r="2.55"/><circle cx="789.67" cy="1037.50" r="2.55"/><circle cx="799.94" cy="1037.50" r="2.55"/><circle cx="810.21" cy="1037.50" r="2.55"/><circle cx="820.48" cy="1037.50" r="2.55"/><circle cx="830.75" cy="1037.50" r="2.55"/><circle cx="841.02" cy="1037.50" r="2.55"/><circle cx="851.29" cy="1037.50" r="2.55"/><circle cx="861.56" cy="1037.50" r="2.55"/><circle cx="871.83" cy="1037.50" r="2.55"/><circle cx="882.10" cy="1037.50" r="2.55"/><circle cx="892.37" cy="1037.50" r="2.55"/><circle cx="902.64" cy="1037.50" r="2.55"/><circle cx="912.91" cy="1037.50" r="2.55"/><circle cx="923.18" cy="1037.50" r="2.55"/><circle cx="933.45" cy="1037.50" r="2.55"/><circle cx="943.72" cy="1037.50" r="2.55"/><circle cx="953.99" cy="1037.50" r="2.55"/><circle cx="964.26" cy="1037.50" r="2.55"/><circle cx="974.53" cy="1037.50" r="2.55"/><circle cx="984.80" cy="1037.50" r="2.55"/><circle cx="995.07" cy="1037.50" r="2.55"/><circle cx="1005.34" cy="1037.50" r="2.55"/><circle cx="1015.61" cy="1037.50" r="2.55"/><circle cx="1025.88" cy="1037.50" r="2.55"/><circle cx="1036.15" cy="1037.50" r="2.55"/><circle cx="1046.42" cy="1037.50" r="2.55"/><circle cx="1056.69" cy="1037.50" r="2.55"/><circle cx="1066.96" cy="1037.50" r="2.55"/><circle cx="1077.23" cy="1037.50" r="2.55"/><circle cx="1087.50" cy="1037.50" r="2.55"/><circle cx="1097.77" cy="1037.50" r="2.55"/><circle cx="1108.04" cy="1037.50" r="2.55"/><circle cx="1118.31" cy="1037.50" r="2.55"/><circle cx="1128.58" cy="1037.50" r="2.55"/><circle cx="1138.85" cy="1037.50" r="2.55"/><circle cx="1149.12" cy="1037.50" r="2.55"/><circle cx="1159.39" cy="1037.50" r="2.55"/><circle cx="1169.66" cy="1037.50" r="2.55"/><circle cx="1179.93" cy="1037.50" r="2.55"/><circle cx="1190.20" cy="1037.50" r="2.55"/><circle cx="1200.47" cy="1037.50" r="2.55"/><circle cx="1210.74" cy="1037.50" r="2.55"/><circle cx="1221.01" cy="1037.50" r="2.55"/><circle cx="1231.28" cy="1037.50" r="2.55"/><circle cx="1241.55" cy="1037.50" r="2.55"/><circle cx="1251.82" cy="1037.50" r="2.55"/><circle cx="1262.09" cy="1037.50" r="2.55"/><circle cx="1272.36" cy="1037.50" r="2.55"/><circle cx="1282.63" cy="1037.50" r="2.55"/><circle cx="1292.90" cy="1037.50" r="2.55"/><circle cx="1303.17" cy="1037.50" r="2.55"/><circle cx="1313.44" cy="1037.50" r="2.55"/><circle cx="1323.71" cy="1037.50" r="2.55"/><circle cx="1333.98" cy="1037.50" r="2.55"/><circle cx="1344.25" cy="1037.50" r="2.55"/><circle cx="1354.52" cy="1037.50" r="2.55"/><circle cx="1364.79" cy="1037.50" r="2.55"/><circle cx="1375.06" cy="1037.50" r="2.55"/><circle cx="1385.33" cy="1037.50" r="2.55"/><circle cx="1395.60" cy="1037.50" r="2.55"/><circle cx="1405.87" cy="1037.50" r="2.55"/><circle cx="1416.14" cy="1037.50" r="2.55"/><circle cx="1426.41" cy="1037.50" r="2.55"/><circle cx="1436.68" cy="1037.50" r="2.55"/><circle cx="1446.95" cy="1037.50" r="2.55"/><circle cx="1457.22" cy="1037.50" r="2.55"/><circle cx="1467.49" cy="1037.50" r="2.55"/><circle cx="1477.76" cy="1037.50" r="2.55"/><circle cx="1488.03" cy="1037.50" r="2.55"/><circle cx="1498.30" cy="1037.50" r="2.55"/><circle cx="1508.57" cy="1037.50" r="2.55"/><circle cx="1518.84" cy="1037.50" r="2.55"/><circle cx="1529.11" cy="1037.50" r="2.55"/><circle cx="1539.38" cy="1037.50" r="2.55"/></g><path d="M60.50 968.50 L70.77 968.50 L81.04 968.50 L91.31 968.50 L101.58 967.60 L111.85 967.60 L122.12 967.60 L132.39 967.60 L142.66 967.60 L152.93 967.60 L163.20 967.60 L173.47 967.60 L183.74 964.60 L194.01 964.60 L204.28 964.60 L214.55 964.60 L224.82 964.60 L235.09 964.60 L245.36 964.60 L255.63 964.60 L265.90 962.30 L276.17 962.30 L286.44 962.30 L296.71 962.30 L306.98 962.30 L317.25 962.30 L327.52 962.30 L337.79 962.30 L348.06 958.30 L358.33 958.30 L368.60 958.30 L378.87 958.30 L389.14 958.30 L399.41 958.30 L409.68 958.30 L419.95 958.30 L430.22 956.60 L440.49 956.60 L450.76 956.60 L461.03 956.60 L471.30 956.60 L481.57 956.60 L491.84 956.60 L502.11 956.60 L512.38 953.30 L522.65 953.30 L532.92 953.30 L543.19 953.30 L553.46 953.30 L563.73 953.30 L574.00 953.30 L584.27 953.30 L594.54 951.40 L604.81 951.40 L615.08 951.40 L625.35 951.40 L635.62 951.40 L645.89 951.40 L656.16 951.40 L666.43 951.40 L676.70 948.30 L686.97 948.30 L697.24 948.30 L707.51 948.30 L717.78 948.30 L728.05 948.30 L738.32 948.30 L748.59 948.30 L758.86 944.20 L769.13 944.20 L779.40 944.20 L789.67 944.20 L799.94 944.20 L810.21 944.20 L820.48 944.20 L830.75 944.20 L841.02 942.30 L851.29 942.30 L861.56 942.30 L871.83 942.30 L882.10 942.30 L892.37 942.30 L902.64 942.30 L912.91 942.30 L923.18 938.30 L933.45 938.30 L943.72 938.30 L953.99 938.30 L964.26 938.30 L974.53 938.30 L984.80 938.30 L995.07 938.30 L1005.34 936.60 L1015.61 936.60 L1025.88 936.60 L1036.15 936.60 L1046.42 936.60 L1056.69 936.60 L1066.96 936.60 L1077.23 936.60 L1087.50 933.20 L1097.77 933.20 L1108.04 933.20 L1118.31 933.20 L1128.58 933.20 L1138.85 933.20 L1149.12 933.20 L1159.39 933.20 L1169.66 931.40 L1179.93 931.40 L1190.20 931.40 L1200.47 931.40 L1210.74 931.40 L1221.01 931.40 L1231.28 931.40 L1241.55 931.40 L1251.82 931.40 L1262.09 931.40 L1272.36 931.40 L1282.63 931.40 L1292.90 931.40 L1303.17 931.40 L1313.44 931.40 L1323.71 931.40 L1333.98 928.30 L1344.25 928.30 L1354.52 928.30 L1364.79 928.30 L1375.06 928.30 L1385.33 928.30 L1395.60 928.30 L1405.87 928.30 L1416.14 925.50 L1426.41 925.50 L1436.68 925.50 L1446.95 925.50 L1457.22 925.50 L1467.49 925.50 L1477.76 925.50 L1488.03 925.50 L1498.30 925.50 L1508.57 925.50 L1518.84 925.50 L1529.11 925.50 L1539.38 925.50" fill="none" stroke="#73bf69" stroke-width="1.2"/><g fill="#73bf69"><circle cx="60.50" cy="968.50" r="2.55"/><circle cx="70.77" cy="968.50" r="2.55"/><circle cx="81.04" cy="968.50" r="2.55"/><circle cx="91.31" cy="968.50" r="2.55"/><circle cx="101.58" cy="967.60" r="2.55"/><circle cx="111.85" cy="967.60" r="2.55"/><circle cx="122.12" cy="967.60" r="2.55"/><circle cx="132.39" cy="967.60" r="2.55"/><circle cx="142.66" cy="967.60" r="2.55"/><circle cx="152.93" cy="967.60" r="2.55"/><circle cx="163.20" cy="967.60" r="2.55"/><circle cx="173.47" cy="967.60" r="2.55"/><circle cx="183.74" cy="964.60" r="2.55"/><circle cx="194.01" cy="964.60" r="2.55"/><circle cx="204.28" cy="964.60" r="2.55"/><circle cx="214.55" cy="964.60" r="2.55"/><circle cx="224.82" cy="964.60" r="2.55"/><circle cx="235.09" cy="964.60" r="2.55"/><circle cx="245.36" cy="964.60" r="2.55"/><circle cx="255.63" cy="964.60" r="2.55"/><circle cx="265.90" cy="962.30" r="2.55"/><circle cx="276.17" cy="962.30" r="2.55"/><circle cx="286.44" cy="962.30" r="2.55"/><circle cx="296.71" cy="962.30" r="2.55"/><circle cx="306.98" cy="962.30" r="2.55"/><circle cx="317.25" cy="962.30" r="2.55"/><circle cx="327.52" cy="962.30" r="2.55"/><circle cx="337.79" cy="962.30" r="2.55"/><circle cx="348.06" cy="958.30" r="2.55"/><circle cx="358.33" cy="958.30" r="2.55"/><circle cx="368.60" cy="958.30" r="2.55"/><circle cx="378.87" cy="958.30" r="2.55"/><circle cx="389.14" cy="958.30" r="2.55"/><circle cx="399.41" cy="958.30" r="2.55"/><circle cx="409.68" cy="958.30" r="2.55"/><circle cx="419.95" cy="958.30" r="2.55"/><circle cx="430.22" cy="956.60" r="2.55"/><circle cx="440.49" cy="956.60" r="2.55"/><circle cx="450.76" cy="956.60" r="2.55"/><circle cx="461.03" cy="956.60" r="2.55"/><circle cx="471.30" cy="956.60" r="2.55"/><circle cx="481.57" cy="956.60" r="2.55"/><circle cx="491.84" cy="956.60" r="2.55"/><circle cx="502.11" cy="956.60" r="2.55"/><circle cx="512.38" cy="953.30" r="2.55"/><circle cx="522.65" cy="953.30" r="2.55"/><circle cx="532.92" cy="953.30" r="2.55"/><circle cx="543.19" cy="953.30" r="2.55"/><circle cx="553.46" cy="953.30" r="2.55"/><circle cx="563.73" cy="953.30" r="2.55"/><circle cx="574.00" cy="953.30" r="2.55"/><circle cx="584.27" cy="953.30" r="2.55"/><circle cx="594.54" cy="951.40" r="2.55"/><circle cx="604.81" cy="951.40" r="2.55"/><circle cx="615.08" cy="951.40" r="2.55"/><circle cx="625.35" cy="951.40" r="2.55"/><circle cx="635.62" cy="951.40" r="2.55"/><circle cx="645.89" cy="951.40" r="2.55"/><circle cx="656.16" cy="951.40" r="2.55"/><circle cx="666.43" cy="951.40" r="2.55"/><circle cx="676.70" cy="948.30" r="2.55"/><circle cx="686.97" cy="948.30" r="2.55"/><circle cx="697.24" cy="948.30" r="2.55"/><circle cx="707.51" cy="948.30" r="2.55"/><circle cx="717.78" cy="948.30" r="2.55"/><circle cx="728.05" cy="948.30" r="2.55"/><circle cx="738.32" cy="948.30" r="2.55"/><circle cx="748.59" cy="948.30" r="2.55"/><circle cx="758.86" cy="944.20" r="2.55"/><circle cx="769.13" cy="944.20" r="2.55"/><circle cx="779.40" cy="944.20" r="2.55"/><circle cx="789.67" cy="944.20" r="2.55"/><circle cx="799.94" cy="944.20" r="2.55"/><circle cx="810.21" cy="944.20" r="2.55"/><circle cx="820.48" cy="944.20" r="2.55"/><circle cx="830.75" cy="944.20" r="2.55"/><circle cx="841.02" cy="942.30" r="2.55"/><circle cx="851.29" cy="942.30" r="2.55"/><circle cx="861.56" cy="942.30" r="2.55"/><circle cx="871.83" cy="942.30" r="2.55"/><circle cx="882.10" cy="942.30" r="2.55"/><circle cx="892.37" cy="942.30" r="2.55"/><circle cx="902.64" cy="942.30" r="2.55"/><circle cx="912.91" cy="942.30" r="2.55"/><circle cx="923.18" cy="938.30" r="2.55"/><circle cx="933.45" cy="938.30" r="2.55"/><circle cx="943.72" cy="938.30" r="2.55"/><circle cx="953.99" cy="938.30" r="2.55"/><circle cx="964.26" cy="938.30" r="2.55"/><circle cx="974.53" cy="938.30" r="2.55"/><circle cx="984.80" cy="938.30" r="2.55"/><circle cx="995.07" cy="938.30" r="2.55"/><circle cx="1005.34" cy="936.60" r="2.55"/><circle cx="1015.61" cy="936.60" r="2.55"/><circle cx="1025.88" cy="936.60" r="2.55"/><circle cx="1036.15" cy="936.60" r="2.55"/><circle cx="1046.42" cy="936.60" r="2.55"/><circle cx="1056.69" cy="936.60" r="2.55"/><circle cx="1066.96" cy="936.60" r="2.55"/><circle cx="1077.23" cy="936.60" r="2.55"/><circle cx="1087.50" cy="933.20" r="2.55"/><circle cx="1097.77" cy="933.20" r="2.55"/><circle cx="1108.04" cy="933.20" r="2.55"/><circle cx="1118.31" cy="933.20" r="2.55"/><circle cx="1128.58" cy="933.20" r="2.55"/><circle cx="1138.85" cy="933.20" r="2.55"/><circle cx="1149.12" cy="933.20" r="2.55"/><circle cx="1159.39" cy="933.20" r="2.55"/><circle cx="1169.66" cy="931.40" r="2.55"/><circle cx="1179.93" cy="931.40" r="2.55"/><circle cx="1190.20" cy="931.40" r="2.55"/><circle cx="1200.47" cy="931.40" r="2.55"/><circle cx="1210.74" cy="931.40" r="2.55"/><circle cx="1221.01" cy="931.40" r="2.55"/><circle cx="1231.28" cy="931.40" r="2.55"/><circle cx="1241.55" cy="931.40" r="2.55"/><circle cx="1251.82" cy="931.40" r="2.55"/><circle cx="1262.09" cy="931.40" r="2.55"/><circle cx="1272.36" cy="931.40" r="2.55"/><circle cx="1282.63" cy="931.40" r="2.55"/><circle cx="1292.90" cy="931.40" r="2.55"/><circle cx="1303.17" cy="931.40" r="2.55"/><circle cx="1313.44" cy="931.40" r="2.55"/><circle cx="1323.71" cy="931.40" r="2.55"/><circle cx="1333.98" cy="928.30" r="2.55"/><circle cx="1344.25" cy="928.30" r="2.55"/><circle cx="1354.52" cy="928.30" r="2.55"/><circle cx="1364.79" cy="928.30" r="2.55"/><circle cx="1375.06" cy="928.30" r="2.55"/><circle cx="1385.33" cy="928.30" r="2.55"/><circle cx="1395.60" cy="928.30" r="2.55"/><circle cx="1405.87" cy="928.30" r="2.55"/><circle cx="1416.14" cy="925.50" r="2.55"/><circle cx="1426.41" cy="925.50" r="2.55"/><circle cx="1436.68" cy="925.50" r="2.55"/><circle cx="1446.95" cy="925.50" r="2.55"/><circle cx="1457.22" cy="925.50" r="2.55"/><circle cx="1467.49" cy="925.50" r="2.55"/><circle cx="1477.76" cy="925.50" r="2.55"/><circle cx="1488.03" cy="925.50" r="2.55"/><circle cx="1498.30" cy="925.50" r="2.55"/><circle cx="1508.57" cy="925.50" r="2.55"/><circle cx="1518.84" cy="925.50" r="2.55"/><circle cx="1529.11" cy="925.50" r="2.55"/><circle cx="1539.38" cy="925.50" r="2.55"/></g><path d="M60.50 880.30 L70.77 880.30 L81.04 880.30 L91.31 880.30 L101.58 880.30 L111.85 880.30 L122.12 880.30 L132.39 880.30 L142.66 878.50 L152.93 878.50 L163.20 878.50 L173.47 878.50 L183.74 878.50 L194.01 878.50 L204.28 878.50 L214.55 878.50 L224.82 876.40 L235.09 876.40 L245.36 876.40 L255.63 876.40 L265.90 876.40 L276.17 876.40 L286.44 876.40 L296.71 876.40 L306.98 875.50 L317.25 875.50 L327.52 875.50 L337.79 875.50 L348.06 874.40 L358.33 874.40 L368.60 874.40 L378.87 874.40 L389.14 874.40 L399.41 874.40 L409.68 874.40 L419.95 874.40 L430.22 872.40 L440.49 872.40 L450.76 872.40 L461.03 872.40 L471.30 872.40 L481.57 872.40 L491.84 872.40 L502.11 872.40 L512.38 870.50 L522.65 870.50 L532.92 870.50 L543.19 870.50 L553.46 870.50 L563.73 870.50 L574.00 870.50 L584.27 870.50 L594.54 869.40 L604.81 869.40 L615.08 869.40 L625.35 869.40 L635.62 869.40 L645.89 869.40 L656.16 869.40 L666.43 869.40 L676.70 867.40 L686.97 867.40 L697.24 867.40 L707.51 867.40 L717.78 867.40 L728.05 867.40 L738.32 867.40 L748.59 867.40 L758.86 865.50 L769.13 865.50 L779.40 865.50 L789.67 865.50 L799.94 865.50 L810.21 865.50 L820.48 865.50 L830.75 865.50 L841.02 863.30 L851.29 863.30 L861.56 863.30 L871.83 863.30 L882.10 863.30 L892.37 863.30 L902.64 863.30 L912.91 863.30 L923.18 862.40 L933.45 862.40 L943.72 862.40 L953.99 862.40 L964.26 862.40 L974.53 862.40 L984.80 862.40 L995.07 862.40 L1005.34 861.40 L1015.61 861.40 L1025.88 861.40 L1036.15 861.40 L1046.42 861.40 L1056.69 861.40 L1066.96 861.40 L1077.23 861.40 L1087.50 859.20 L1097.77 859.20 L1108.04 859.20 L1118.31 859.20 L1128.58 859.20 L1138.85 859.20 L1149.12 859.20 L1159.39 859.20 L1169.66 858.20 L1179.93 858.20 L1190.20 858.20 L1200.47 858.20 L1210.74 858.20 L1221.01 858.20 L1231.28 858.20 L1241.55 858.20 L1251.82 856.40 L1262.09 856.40 L1272.36 856.40 L1282.63 856.40 L1292.90 856.40 L1303.17 856.40 L1313.44 856.40 L1323.71 856.40 L1333.98 854.20 L1344.25 854.20 L1354.52 854.20 L1364.79 854.20 L1375.06 854.20 L1385.33 854.20 L1395.60 854.20 L1405.87 854.20 L1416.14 853.30 L1426.41 853.30 L1436.68 853.30 L1446.95 853.30 L1457.22 853.30 L1467.49 853.30 L1477.76 853.30 L1488.03 853.30 L1498.30 853.30 L1508.57 853.30 L1518.84 853.30 L1529.11 853.30 L1539.38 853.30" fill="none" stroke="#8ab8ff" stroke-width="1.2"/><g fill="#8ab8ff"><circle cx="60.50" cy="880.30" r="2.55"/><circle cx="70.77" cy="880.30" r="2.55"/><circle cx="81.04" cy="880.30" r="2.55"/><circle cx="91.31" cy="880.30" r="2.55"/><circle cx="101.58" cy="880.30" r="2.55"/><circle cx="111.85" cy="880.30" r="2.55"/><circle cx="122.12" cy="880.30" r="2.55"/><circle cx="132.39" cy="880.30" r="2.55"/><circle cx="142.66" cy="878.50" r="2.55"/><circle cx="152.93" cy="878.50" r="2.55"/><circle cx="163.20" cy="878.50" r="2.55"/><circle cx="173.47" cy="878.50" r="2.55"/><circle cx="183.74" cy="878.50" r="2.55"/><circle cx="194.01" cy="878.50" r="2.55"/><circle cx="204.28" cy="878.50" r="2.55"/><circle cx="214.55" cy="878.50" r="2.55"/><circle cx="224.82" cy="876.40" r="2.55"/><circle cx="235.09" cy="876.40" r="2.55"/><circle cx="245.36" cy="876.40" r="2.55"/><circle cx="255.63" cy="876.40" r="2.55"/><circle cx="265.90" cy="876.40" r="2.55"/><circle cx="276.17" cy="876.40" r="2.55"/><circle cx="286.44" cy="876.40" r="2.55"/><circle cx="296.71" cy="876.40" r="2.55"/><circle cx="306.98" cy="875.50" r="2.55"/><circle cx="317.25" cy="875.50" r="2.55"/><circle cx="327.52" cy="875.50" r="2.55"/><circle cx="337.79" cy="875.50" r="2.55"/><circle cx="348.06" cy="874.40" r="2.55"/><circle cx="358.33" cy="874.40" r="2.55"/><circle cx="368.60" cy="874.40" r="2.55"/><circle cx="378.87" cy="874.40" r="2.55"/><circle cx="389.14" cy="874.40" r="2.55"/><circle cx="399.41" cy="874.40" r="2.55"/><circle cx="409.68" cy="874.40" r="2.55"/><circle cx="419.95" cy="874.40" r="2.55"/><circle cx="430.22" cy="872.40" r="2.55"/><circle cx="440.49" cy="872.40" r="2.55"/><circle cx="450.76" cy="872.40" r="2.55"/><circle cx="461.03" cy="872.40" r="2.55"/><circle cx="471.30" cy="872.40" r="2.55"/><circle cx="481.57" cy="872.40" r="2.55"/><circle cx="491.84" cy="872.40" r="2.55"/><circle cx="502.11" cy="872.40" r="2.55"/><circle cx="512.38" cy="870.50" r="2.55"/><circle cx="522.65" cy="870.50" r="2.55"/><circle cx="532.92" cy="870.50" r="2.55"/><circle cx="543.19" cy="870.50" r="2.55"/><circle cx="553.46" cy="870.50" r="2.55"/><circle cx="563.73" cy="870.50" r="2.55"/><circle cx="574.00" cy="870.50" r="2.55"/><circle cx="584.27" cy="870.50" r="2.55"/><circle cx="594.54" cy="869.40" r="2.55"/><circle cx="604.81" cy="869.40" r="2.55"/><circle cx="615.08" cy="869.40" r="2.55"/><circle cx="625.35" cy="869.40" r="2.55"/><circle cx="635.62" cy="869.40" r="2.55"/><circle cx="645.89" cy="869.40" r="2.55"/><circle cx="656.16" cy="869.40" r="2.55"/><circle cx="666.43" cy="869.40" r="2.55"/><circle cx="676.70" cy="867.40" r="2.55"/><circle cx="686.97" cy="867.40" r="2.55"/><circle cx="697.24" cy="867.40" r="2.55"/><circle cx="707.51" cy="867.40" r="2.55"/><circle cx="717.78" cy="867.40" r="2.55"/><circle cx="728.05" cy="867.40" r="2.55"/><circle cx="738.32" cy="867.40" r="2.55"/><circle cx="748.59" cy="867.40" r="2.55"/><circle cx="758.86" cy="865.50" r="2.55"/><circle cx="769.13" cy="865.50" r="2.55"/><circle cx="779.40" cy="865.50" r="2.55"/><circle cx="789.67" cy="865.50" r="2.55"/><circle cx="799.94" cy="865.50" r="2.55"/><circle cx="810.21" cy="865.50" r="2.55"/><circle cx="820.48" cy="865.50" r="2.55"/><circle cx="830.75" cy="865.50" r="2.55"/><circle cx="841.02" cy="863.30" r="2.55"/><circle cx="851.29" cy="863.30" r="2.55"/><circle cx="861.56" cy="863.30" r="2.55"/><circle cx="871.83" cy="863.30" r="2.55"/><circle cx="882.10" cy="863.30" r="2.55"/><circle cx="892.37" cy="863.30" r="2.55"/><circle cx="902.64" cy="863.30" r="2.55"/><circle cx="912.91" cy="863.30" r="2.55"/><circle cx="923.18" cy="862.40" r="2.55"/><circle cx="933.45" cy="862.40" r="2.55"/><circle cx="943.72" cy="862.40" r="2.55"/><circle cx="953.99" cy="862.40" r="2.55"/><circle cx="964.26" cy="862.40" r="2.55"/><circle cx="974.53" cy="862.40" r="2.55"/><circle cx="984.80" cy="862.40" r="2.55"/><circle cx="995.07" cy="862.40" r="2.55"/><circle cx="1005.34" cy="861.40" r="2.55"/><circle cx="1015.61" cy="861.40" r="2.55"/><circle cx="1025.88" cy="861.40" r="2.55"/><circle cx="1036.15" cy="861.40" r="2.55"/><circle cx="1046.42" cy="861.40" r="2.55"/><circle cx="1056.69" cy="861.40" r="2.55"/><circle cx="1066.96" cy="861.40" r="2.55"/><circle cx="1077.23" cy="861.40" r="2.55"/><circle cx="1087.50" cy="859.20" r="2.55"/><circle cx="1097.77" cy="859.20" r="2.55"/><circle cx="1108.04" cy="859.20" r="2.55"/><circle cx="1118.31" cy="859.20" r="2.55"/><circle cx="1128.58" cy="859.20" r="2.55"/><circle cx="1138.85" cy="859.20" r="2.55"/><circle cx="1149.12" cy="859.20" r="2.55"/><circle cx="1159.39" cy="859.20" r="2.55"/><circle cx="1169.66" cy="858.20" r="2.55"/><circle cx="1179.93" cy="858.20" r="2.55"/><circle cx="1190.20" cy="858.20" r="2.55"/><circle cx="1200.47" cy="858.20" r="2.55"/><circle cx="1210.74" cy="858.20" r="2.55"/><circle cx="1221.01" cy="858.20" r="2.55"/><circle cx="1231.28" cy="858.20" r="2.55"/><circle cx="1241.55" cy="858.20" r="2.55"/><circle cx="1251.82" cy="856.40" r="2.55"/><circle cx="1262.09" cy="856.40" r="2.55"/><circle cx="1272.36" cy="856.40" r="2.55"/><circle cx="1282.63" cy="856.40" r="2.55"/><circle cx="1292.90" cy="856.40" r="2.55"/><circle cx="1303.17" cy="856.40" r="2.55"/><circle cx="1313.44" cy="856.40" r="2.55"/><circle cx="1323.71" cy="856.40" r="2.55"/><circle cx="1333.98" cy="854.20" r="2.55"/><circle cx="1344.25" cy="854.20" r="2.55"/><circle cx="1354.52" cy="854.20" r="2.55"/><circle cx="1364.79" cy="854.20" r="2.55"/><circle cx="1375.06" cy="854.20" r="2.55"/><circle cx="1385.33" cy="854.20" r="2.55"/><circle cx="1395.60" cy="854.20" r="2.55"/><circle cx="1405.87" cy="854.20" r="2.55"/><circle cx="1416.14" cy="853.30" r="2.55"/><circle cx="1426.41" cy="853.30" r="2.55"/><circle cx="1436.68" cy="853.30" r="2.55"/><circle cx="1446.95" cy="853.30" r="2.55"/><circle cx="1457.22" cy="853.30" r="2.55"/><circle cx="1467.49" cy="853.30" r="2.55"/><circle cx="1477.76" cy="853.30" r="2.55"/><circle cx="1488.03" cy="853.30" r="2.55"/><circle cx="1498.30" cy="853.30" r="2.55"/><circle cx="1508.57" cy="853.30" r="2.55"/><circle cx="1518.84" cy="853.30" r="2.55"/><circle cx="1529.11" cy="853.30" r="2.55"/><circle cx="1539.38" cy="853.30" r="2.55"/></g><path d="M60.50 785.20 L70.77 785.20 L81.04 785.20 L91.31 785.20 L101.58 782.30 L111.85 782.30 L122.12 782.30 L132.39 782.30 L142.66 782.30 L152.93 782.30 L163.20 782.30 L173.47 782.30 L183.74 778.20 L194.01 778.20 L204.28 778.20 L214.55 778.20 L224.82 778.20 L235.09 778.20 L245.36 778.20 L255.63 778.20 L265.90 775.30 L276.17 775.30 L286.44 775.30 L296.71 775.30 L306.98 775.30 L317.25 775.30 L327.52 775.30 L337.79 775.30 L348.06 771.20 L358.33 771.20 L368.60 771.20 L378.87 771.20 L389.14 771.20 L399.41 771.20 L409.68 771.20 L419.95 771.20 L430.22 767.30 L440.49 767.30 L450.76 767.30 L461.03 767.30 L471.30 767.30 L481.57 767.30 L491.84 767.30 L502.11 767.30 L512.38 766.10 L522.65 766.10 L532.92 766.10 L543.19 766.10 L553.46 766.10 L563.73 766.10 L574.00 766.10 L584.27 766.10 L594.54 762.50 L604.81 762.50 L615.08 762.50 L625.35 762.50 L635.62 762.50 L645.89 762.50 L656.16 762.50 L666.43 762.50 L676.70 758.40 L686.97 758.40 L697.24 758.40 L707.51 758.40 L717.78 758.40 L728.05 758.40 L738.32 758.40 L748.59 758.40 L758.86 756.20 L769.13 756.20 L779.40 756.20 L789.67 756.20 L799.94 756.20 L810.21 756.20 L820.48 756.20 L830.75 756.20 L841.02 754.20 L851.29 754.20 L861.56 754.20 L871.83 754.20 L882.10 754.20 L892.37 754.20 L902.64 754.20 L912.91 754.20 L923.18 752.50 L933.45 752.50 L943.72 752.50 L953.99 752.50 L964.26 752.50 L974.53 752.50 L984.80 752.50 L995.07 752.50 L1005.34 750.40 L1015.61 750.40 L1025.88 750.40 L1036.15 750.40 L1046.42 750.40 L1056.69 750.40 L1066.96 750.40 L1077.23 750.40 L1087.50 748.40 L1097.77 748.40 L1108.04 748.40 L1118.31 748.40 L1128.58 746.30 L1138.85 746.30 L1149.12 746.30 L1159.39 746.30 L1169.66 746.30 L1179.93 746.30 L1190.20 746.30 L1200.47 746.30 L1210.74 742.30 L1221.01 742.30 L1231.28 742.30 L1241.55 742.30 L1251.82 742.30 L1262.09 742.30 L1272.36 742.30 L1282.63 742.30 L1292.90 740.30 L1303.17 740.30 L1313.44 740.30 L1323.71 740.30 L1333.98 740.30 L1344.25 740.30 L1354.52 740.30 L1364.79 740.30 L1375.06 737.30 L1385.33 737.30 L1395.60 737.30 L1405.87 737.30 L1416.14 737.30 L1426.41 737.30 L1436.68 737.30 L1446.95 737.30 L1457.22 737.30 L1467.49 737.30 L1477.76 737.30 L1488.03 737.30 L1498.30 737.30 L1508.57 737.30 L1518.84 737.30 L1529.11 737.30 L1539.38 737.30" fill="none" stroke="#f2cc0c" stroke-width="1.2"/><g fill="#f2cc0c"><circle cx="60.50" cy="785.20" r="2.55"/><circle cx="70.77" cy="785.20" r="2.55"/><circle cx="81.04" cy="785.20" r="2.55"/><circle cx="91.31" cy="785.20" r="2.55"/><circle cx="101.58" cy="782.30" r="2.55"/><circle cx="111.85" cy="782.30" r="2.55"/><circle cx="122.12" cy="782.30" r="2.55"/><circle cx="132.39" cy="782.30" r="2.55"/><circle cx="142.66" cy="782.30" r="2.55"/><circle cx="152.93" cy="782.30" r="2.55"/><circle cx="163.20" cy="782.30" r="2.55"/><circle cx="173.47" cy="782.30" r="2.55"/><circle cx="183.74" cy="778.20" r="2.55"/><circle cx="194.01" cy="778.20" r="2.55"/><circle cx="204.28" cy="778.20" r="2.55"/><circle cx="214.55" cy="778.20" r="2.55"/><circle cx="224.82" cy="778.20" r="2.55"/><circle cx="235.09" cy="778.20" r="2.55"/><circle cx="245.36" cy="778.20" r="2.55"/><circle cx="255.63" cy="778.20" r="2.55"/><circle cx="265.90" cy="775.30" r="2.55"/><circle cx="276.17" cy="775.30" r="2.55"/><circle cx="286.44" cy="775.30" r="2.55"/><circle cx="296.71" cy="775.30" r="2.55"/><circle cx="306.98" cy="775.30" r="2.55"/><circle cx="317.25" cy="775.30" r="2.55"/><circle cx="327.52" cy="775.30" r="2.55"/><circle cx="337.79" cy="775.30" r="2.55"/><circle cx="348.06" cy="771.20" r="2.55"/><circle cx="358.33" cy="771.20" r="2.55"/><circle cx="368.60" cy="771.20" r="2.55"/><circle cx="378.87" cy="771.20" r="2.55"/><circle cx="389.14" cy="771.20" r="2.55"/><circle cx="399.41" cy="771.20" r="2.55"/><circle cx="409.68" cy="771.20" r="2.55"/><circle cx="419.95" cy="771.20" r="2.55"/><circle cx="430.22" cy="767.30" r="2.55"/><circle cx="440.49" cy="767.30" r="2.55"/><circle cx="450.76" cy="767.30" r="2.55"/><circle cx="461.03" cy="767.30" r="2.55"/><circle cx="471.30" cy="767.30" r="2.55"/><circle cx="481.57" cy="767.30" r="2.55"/><circle cx="491.84" cy="767.30" r="2.55"/><circle cx="502.11" cy="767.30" r="2.55"/><circle cx="512.38" cy="766.10" r="2.55"/><circle cx="522.65" cy="766.10" r="2.55"/><circle cx="532.92" cy="766.10" r="2.55"/><circle cx="543.19" cy="766.10" r="2.55"/><circle cx="553.46" cy="766.10" r="2.55"/><circle cx="563.73" cy="766.10" r="2.55"/><circle cx="574.00" cy="766.10" r="2.55"/><circle cx="584.27" cy="766.10" r="2.55"/><circle cx="594.54" cy="762.50" r="2.55"/><circle cx="604.81" cy="762.50" r="2.55"/><circle cx="615.08" cy="762.50" r="2.55"/><circle cx="625.35" cy="762.50" r="2.55"/><circle cx="635.62" cy="762.50" r="2.55"/><circle cx="645.89" cy="762.50" r="2.55"/><circle cx="656.16" cy="762.50" r="2.55"/><circle cx="666.43" cy="762.50" r="2.55"/><circle cx="676.70" cy="758.40" r="2.55"/><circle cx="686.97" cy="758.40" r="2.55"/><circle cx="697.24" cy="758.40" r="2.55"/><circle cx="707.51" cy="758.40" r="2.55"/><circle cx="717.78" cy="758.40" r="2.55"/><circle cx="728.05" cy="758.40" r="2.55"/><circle cx="738.32" cy="758.40" r="2.55"/><circle cx="748.59" cy="758.40" r="2.55"/><circle cx="758.86" cy="756.20" r="2.55"/><circle cx="769.13" cy="756.20" r="2.55"/><circle cx="779.40" cy="756.20" r="2.55"/><circle cx="789.67" cy="756.20" r="2.55"/><circle cx="799.94" cy="756.20" r="2.55"/><circle cx="810.21" cy="756.20" r="2.55"/><circle cx="820.48" cy="756.20" r="2.55"/><circle cx="830.75" cy="756.20" r="2.55"/><circle cx="841.02" cy="754.20" r="2.55"/><circle cx="851.29" cy="754.20" r="2.55"/><circle cx="861.56" cy="754.20" r="2.55"/><circle cx="871.83" cy="754.20" r="2.55"/><circle cx="882.10" cy="754.20" r="2.55"/><circle cx="892.37" cy="754.20" r="2.55"/><circle cx="902.64" cy="754.20" r="2.55"/><circle cx="912.91" cy="754.20" r="2.55"/><circle cx="923.18" cy="752.50" r="2.55"/><circle cx="933.45" cy="752.50" r="2.55"/><circle cx="943.72" cy="752.50" r="2.55"/><circle cx="953.99" cy="752.50" r="2.55"/><circle cx="964.26" cy="752.50" r="2.55"/><circle cx="974.53" cy="752.50" r="2.55"/><circle cx="984.80" cy="752.50" r="2.55"/><circle cx="995.07" cy="752.50" r="2.55"/><circle cx="1005.34" cy="750.40" r="2.55"/><circle cx="1015.61" cy="750.40" r="2.55"/><circle cx="1025.88" cy="750.40" r="2.55"/><circle cx="1036.15" cy="750.40" r="2.55"/><circle cx="1046.42" cy="750.40" r="2.55"/><circle cx="1056.69" cy="750.40" r="2.55"/><circle cx="1066.96" cy="750.40" r="2.55"/><circle cx="1077.23" cy="750.40" r="2.55"/><circle cx="1087.50" cy="748.40" r="2.55"/><circle cx="1097.77" cy="748.40" r="2.55"/><circle cx="1108.04" cy="748.40" r="2.55"/><circle cx="1118.31" cy="748.40" r="2.55"/><circle cx="1128.58" cy="746.30" r="2.55"/><circle cx="1138.85" cy="746.30" r="2.55"/><circle cx="1149.12" cy="746.30" r="2.55"/><circle cx="1159.39" cy="746.30" r="2.55"/><circle cx="1169.66" cy="746.30" r="2.55"/><circle cx="1179.93" cy="746.30" r="2.55"/><circle cx="1190.20" cy="746.30" r="2.55"/><circle cx="1200.47" cy="746.30" r="2.55"/><circle cx="1210.74" cy="742.30" r="2.55"/><circle cx="1221.01" cy="742.30" r="2.55"/><circle cx="1231.28" cy="742.30" r="2.55"/><circle cx="1241.55" cy="742.30" r="2.55"/><circle cx="1251.82" cy="742.30" r="2.55"/><circle cx="1262.09" cy="742.30" r="2.55"/><circle cx="1272.36" cy="742.30" r="2.55"/><circle cx="1282.63" cy="742.30" r="2.55"/><circle cx="1292.90" cy="740.30" r="2.55"/><circle cx="1303.17" cy="740.30" r="2.55"/><circle cx="1313.44" cy="740.30" r="2.55"/><circle cx="1323.71" cy="740.30" r="2.55"/><circle cx="1333.98" cy="740.30" r="2.55"/><circle cx="1344.25" cy="740.30" r="2.55"/><circle cx="1354.52" cy="740.30" r="2.55"/><circle cx="1364.79" cy="740.30" r="2.55"/><circle cx="1375.06" cy="737.30" r="2.55"/><circle cx="1385.33" cy="737.30" r="2.55"/><circle cx="1395.60" cy="737.30" r="2.55"/><circle cx="1405.87" cy="737.30" r="2.55"/><circle cx="1416.14" cy="737.30" r="2.55"/><circle cx="1426.41" cy="737.30" r="2.55"/><circle cx="1436.68" cy="737.30" r="2.55"/><circle cx="1446.95" cy="737.30" r="2.55"/><circle cx="1457.22" cy="737.30" r="2.55"/><circle cx="1467.49" cy="737.30" r="2.55"/><circle cx="1477.76" cy="737.30" r="2.55"/><circle cx="1488.03" cy="737.30" r="2.55"/><circle cx="1498.30" cy="737.30" r="2.55"/><circle cx="1508.57" cy="737.30" r="2.55"/><circle cx="1518.84" cy="737.30" r="2.55"/><circle cx="1529.11" cy="737.30" r="2.55"/><circle cx="1539.38" cy="737.30" r="2.55"/></g></svg>
<div style="position:absolute;left:50.2px;top:1042.00px;font-family:'Liberation Sans', sans-serif;font-size:13.2px;line-height:13.2px;color:#ccccdc;font-weight:normal;white-space:pre;transform:translateX(-100%);">0</div>
<div style="position:absolute;left:50.2px;top:1002.00px;font-family:'Liberation Sans', sans-serif;font-size:13.2px;line-height:13.2px;color:#ccccdc;font-weight:normal;white-space:pre;transform:translateX(-100%);">500</div>
<div style="position:absolute;left:50.2px;top:961.00px;font-family:'Liberation Sans', sans-serif;font-size:13.2px;line-height:13.2px;color:#ccccdc;font-weight:normal;white-space:pre;transform:translateX(-100%);">1000</div>
<div style="position:absolute;left:50.2px;top:921.00px;font-family:'Liberation Sans', sans-serif;font-size:13.2px;line-height:13.2px;color:#ccccdc;font-weight:normal;white-space:pre;transform:translateX(-100%);">1500</div>
<div style="position:absolute;left:50.2px;top:881.00px;font-family:'Liberation Sans', sans-serif;font-size:13.2px;line-height:13.2px;color:#ccccdc;font-weight:normal;white-space:pre;transform:translateX(-100%);">2000</div>
<div style="position:absolute;left:50.2px;top:840.00px;font-family:'Liberation Sans', sans-serif;font-size:13.2px;line-height:13.2px;color:#ccccdc;font-weight:normal;white-space:pre;transform:translateX(-100%);">2500</div>
<div style="position:absolute;left:50.2px;top:800.00px;font-family:'Liberation Sans', sans-serif;font-size:13.2px;line-height:13.2px;color:#ccccdc;font-weight:normal;white-space:pre;transform:translateX(-100%);">3000</div>
<div style="position:absolute;left:50.2px;top:760.00px;font-family:'Liberation Sans', sans-serif;font-size:13.2px;line-height:13.2px;color:#ccccdc;font-weight:normal;white-space:pre;transform:translateX(-100%);">3500</div>
<div style="position:absolute;left:50.2px;top:719.00px;font-family:'Liberation Sans', sans-serif;font-size:13.2px;line-height:13.2px;color:#ccccdc;font-weight:normal;white-space:pre;transform:translateX(-100%);">4000</div>
<div style="position:absolute;left:183.5px;top:1057.00px;font-family:'Liberation Sans', sans-serif;font-size:12.8px;line-height:12.8px;color:#ccccdc;font-weight:normal;white-space:pre;transform:translateX(-50%);">16:10</div>
<div style="position:absolute;left:388.5px;top:1057.00px;font-family:'Liberation Sans', sans-serif;font-size:12.8px;line-height:12.8px;color:#ccccdc;font-weight:normal;white-space:pre;transform:translateX(-50%);">16:15</div>
<div style="position:absolute;left:593.5px;top:1057.00px;font-family:'Liberation Sans', sans-serif;font-size:12.8px;line-height:12.8px;color:#ccccdc;font-weight:normal;white-space:pre;transform:translateX(-50%);">16:20</div>
<div style="position:absolute;left:799.5px;top:1057.00px;font-family:'Liberation Sans', sans-serif;font-size:12.8px;line-height:12.8px;color:#ccccdc;font-weight:normal;white-space:pre;transform:translateX(-50%);">16:25</div>
<div style="position:absolute;left:1004.5px;top:1057.00px;font-family:'Liberation Sans', sans-serif;font-size:12.8px;line-height:12.8px;color:#ccccdc;font-weight:normal;white-space:pre;transform:translateX(-50%);">16:30</div>
<div style="position:absolute;left:1210.5px;top:1057.00px;font-family:'Liberation Sans', sans-serif;font-size:12.8px;line-height:12.8px;color:#ccccdc;font-weight:normal;white-space:pre;transform:translateX(-50%);">16:35</div>
<div style="position:absolute;left:1415.5px;top:1057.00px;font-family:'Liberation Sans', sans-serif;font-size:12.8px;line-height:12.8px;color:#ccccdc;font-weight:normal;white-space:pre;transform:translateX(-50%);">16:40</div>
<div style="position:absolute;left:24px;top:1081px;width:14px;height:4px;background:#73bf69;border-radius:1px;"></div>
<div style="position:absolute;left:46px;top:1077.00px;font-family:'Liberation Sans', sans-serif;font-size:12.7px;line-height:12.7px;color:#ccccdc;font-weight:normal;white-space:pre;">{account_id="SEBITEST", retailer_id="3", source="ERP"}</div>
<div style="position:absolute;left:378.2px;top:1081px;width:14px;height:4px;background:#f2cc0c;border-radius:1px;"></div>
<div style="position:absolute;left:400px;top:1077.00px;font-family:'Liberation Sans', sans-serif;font-size:12.75px;line-height:12.75px;color:#ccccdc;font-weight:normal;white-space:pre;">{account_id="SEBITEST", retailer_id="3", source="POS"}</div>
<div style="position:absolute;left:734.3px;top:1081px;width:14px;height:4px;background:#8ab8ff;border-radius:1px;"></div>
<div style="position:absolute;left:755.5px;top:1077.00px;font-family:'Liberation Sans', sans-serif;font-size:12.8px;line-height:12.8px;color:#ccccdc;font-weight:normal;white-space:pre;">{account_id="SEBITEST", retailer_id="3", source="WMS"}</div>
<div style="position:absolute;left:1095px;top:1081px;width:14px;height:4px;background:#ff780a;border-radius:1px;"></div>
<div style="position:absolute;left:1117px;top:1077.00px;font-family:'Liberation Sans', sans-serif;font-size:12.92px;line-height:12.92px;color:#ccccdc;font-weight:normal;white-space:pre;">{account_id="SEBITEST", retailer_id="3", source="batch"}</div>
</body></html>
